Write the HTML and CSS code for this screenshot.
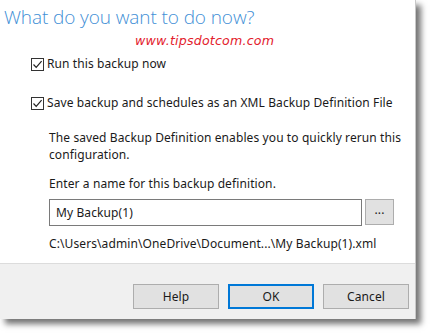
FILE: index.html
```html
<!DOCTYPE html>
<html>
<head>
<meta charset="utf-8">
<link rel="stylesheet" href="styles.css">
</head>
<body>
<div class="dialog">
  <div class="content">
    <h1 class="title">What do you want to do now?</h1>
    <div class="watermark">www.tipsdotcom.com</div>
    <label class="check row1"><span class="box"><svg width="11" height="11" viewBox="0 0 11 11"><path d="M1.5 5.5 L4.2 8.3 L9.6 2.2" fill="none" stroke="#222" stroke-width="1.2"/></svg></span>Run this backup now</label>
    <label class="check row2"><span class="box"><svg width="11" height="11" viewBox="0 0 11 11"><path d="M1.5 5.5 L4.2 8.3 L9.6 2.2" fill="none" stroke="#222" stroke-width="1.2"/></svg></span>Save backup and schedules as an XML Backup Definition File</label>
    <div class="indent">
      <p class="desc">The saved Backup Definition enables you to quickly rerun this configuration.</p>
      <p class="prompt">Enter a name for this backup definition.</p>
      <div class="name-row">
        <div class="input">My Backup(1)</div>
        <div class="browse">...</div>
      </div>
      <p class="path">C:\Users\admin\OneDrive\Document...\My Backup(1).xml</p>
    </div>
  </div>
  <div class="footer">
    <div class="btn">Help</div>
    <div class="btn primary">OK</div>
    <div class="btn">Cancel</div>
  </div>
</div>
</body>
</html>
```
FILE: styles.css
```css
html, body {
  margin: 0;
  padding: 0;
  background: #ffffff;
}
body {
  width: 432px;
  height: 335px;
  overflow: hidden;
  font-family: "Noto Sans", "Open Sans", sans-serif;
  font-size: 12px;
  letter-spacing: 0.1px;
  color: #1a1a1a;
}
.dialog {
  width: 416px;
  height: 319px;
  background: #ffffff;
  border-right: 1px solid #c8c8c8;
  box-sizing: border-box;
  box-shadow: 5px 5px 6px rgba(0, 0, 0, 0.55);
  display: flex;
  flex-direction: column;
}
.content {
  flex: 1;
}
.title {
  margin: 0;
  padding: 5px 0 0 4px;
  font-family: "Open Sans", sans-serif;
  font-weight: 300;
  font-size: 19px;
  letter-spacing: -0.1px;
  line-height: 24px;
  color: #3f8fd6;
}
.watermark {
  margin: 5px 0 0 135px;
  font-family: "DejaVu Sans", sans-serif;
  font-style: italic;
  font-size: 12.6px;
  letter-spacing: 0.2px;
  line-height: 14px;
  color: #e3202b;
}
.check {
  display: flex;
  align-items: center;
  margin-left: 31px;
  line-height: 16px;
}
.row1 { margin-top: 8px; }
.row2 { margin-top: 23px; }
.box {
  width: 11px;
  height: 11px;
  border: 1px solid #333;
  margin-right: 3px;
  display: flex;
}
.indent {
  margin-left: 49px;
  width: 356px;
}
.desc {
  margin: 18px 0 0;
  line-height: 17px;
}
.prompt {
  margin: 12px 0 0;
  line-height: 17px;
}
.name-row {
  display: flex;
  margin-top: 7px;
  gap: 3px;
}
.input {
  width: 313px;
  height: 27px;
  box-sizing: border-box;
  border: 1px solid #7a7a7a;
  padding: 0 6px;
  line-height: 25px;
}
.browse {
  width: 29px;
  height: 26px;
  box-sizing: border-box;
  background: #e1e1e1;
  border: 1px solid #adadad;
  text-align: center;
  line-height: 20px;
}
.path {
  margin: 9px 0 0;
  line-height: 17px;
}
.footer {
  height: 56px;
  background: #f0f0f0;
  border-top: 1px solid #dcdcdc;
  box-sizing: border-box;
  display: flex;
  justify-content: flex-end;
  align-items: flex-start;
  gap: 9px;
  padding: 20px 6px 0 0;
}
.btn {
  width: 86px;
  height: 25px;
  box-sizing: border-box;
  background: #e1e1e1;
  border: 1px solid #adadad;
  text-align: center;
  line-height: 23px;
}
.btn.primary {
  border: 2px solid #0078d7;
  line-height: 21px;
}
```
